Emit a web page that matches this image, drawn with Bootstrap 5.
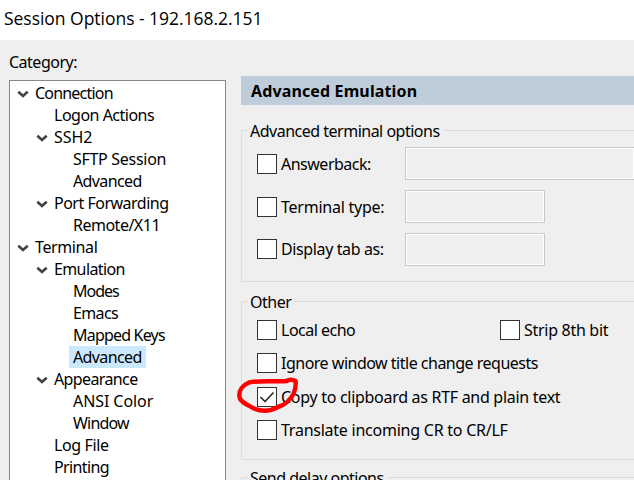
<!DOCTYPE html>
<html lang="en">
<head>
<meta charset="utf-8">
<title>Session Options - 192.168.2.151</title>
<link href="https://cdn.jsdelivr.net/npm/bootstrap@5.3.0/dist/css/bootstrap.min.css" rel="stylesheet">
<style>
body{width:634px;height:480px;background:#efefef;color:#000;font:16px/22px "Noto Sans","Open Sans",sans-serif;letter-spacing:-.38px;white-space:nowrap}
.titlebar{height:40px;padding:0 0 5px 4px;font:17.5px/24px "Open Sans","Noto Sans",sans-serif;letter-spacing:-.03px}
.side{width:241px;padding:11px 15px 0 9px}
.tree{margin-top:7px;height:400px;border:1px solid #828790;border-bottom:0;padding-top:1px}
.node{height:22px;padding-left:25px}
.node svg{width:12px;height:8px;margin:1px 6px 0 -18px;flex:none}
.l1{padding-left:44px}
.l2{padding-left:59px}
.l2 span{padding:0 4px;height:22px}
.sel{background:#cce8ff}
.banner{margin-top:36px;height:29px;padding-left:10px;background:#bfcddb;font-weight:700;letter-spacing:.13px}
.group{border:1px solid #dcdcdc;border-right:0;padding-left:15px}
.caption{width:max-content;height:22px;margin:-11px 0 0 -9px;padding:0 3px 0 2px;background:#efefef}
.g1{margin-top:25px;height:152px}
.g2{margin-top:19px;height:159px}
.g3{margin-top:17px;height:3px;border-bottom:0}
.fields{gap:10px;padding-top:5px}
.checks{gap:13.3px;padding-top:7px}
.opt{height:20px}
.box{width:20px;height:20px;border:1px solid #333;background:#fff;margin-right:4px;flex:none}
.field{height:33px;border:1px solid #c8c8c8;box-shadow:inset 0 0 0 1px #fff}
.name{width:148px;flex:none}
.raise{padding-bottom:2px}
.f2{width:140px}
.wide{width:243px;flex:none}
.scribble{left:230px;top:370px;pointer-events:none}
.w-a{letter-spacing:-1px}
.w-b{letter-spacing:-.8px}
.w-c{letter-spacing:-.62px}
.w-d{letter-spacing:-.5px}
.w-e{letter-spacing:-.29px}
.w-f{letter-spacing:-.24px}
.w-g{letter-spacing:-.08px}
</style>
<script src="https://cdn.jsdelivr.net/npm/bootstrap@5.3.0/dist/js/bootstrap.bundle.min.js"></script>
</head>
<body class="m-0 overflow-hidden position-relative">
<svg class="d-none"><symbol id="chev" viewBox="0 0 12 8"><path d="M1.3 1.7 6 6l4.700-4.300" fill="none" stroke="#444" stroke-width="2.700"/></symbol></svg>
<header class="titlebar bg-white d-flex align-items-center">Session Options - 192.168.2.151</header>
<main class="d-flex">
<aside class="side flex-shrink-0">
<div class="w-d">Category:</div>
<div class="tree bg-white">
<div class="node d-flex align-items-center"><svg><use href="#chev"/></svg><span class="w-b">Connection</span></div>
<div class="node l1 d-flex align-items-center"><span class="w-d">Logon Actions</span></div>
<div class="node l1 d-flex align-items-center"><svg><use href="#chev"/></svg><span class="w-g">SSH2</span></div>
<div class="node l2 d-flex align-items-center"><span class="w-e">SFTP Session</span></div>
<div class="node l2 d-flex align-items-center"><span class="w-c">Advanced</span></div>
<div class="node l1 d-flex align-items-center"><svg><use href="#chev"/></svg><span class="w-d">Port Forwarding</span></div>
<div class="node l2 d-flex align-items-center"><span class="w-d">Remote/X11</span></div>
<div class="node d-flex align-items-center"><svg><use href="#chev"/></svg><span>Terminal</span></div>
<div class="node l1 d-flex align-items-center"><svg><use href="#chev"/></svg><span class="w-c">Emulation</span></div>
<div class="node l2 d-flex align-items-center"><span class="w-a">Modes</span></div>
<div class="node l2 d-flex align-items-center"><span class="w-c">Emacs</span></div>
<div class="node l2 d-flex align-items-center"><span class="w-b">Mapped Keys</span></div>
<div class="node l2 d-flex align-items-center"><span class="sel w-c">Advanced</span></div>
<div class="node l1 d-flex align-items-center"><svg><use href="#chev"/></svg><span class="w-c">Appearance</span></div>
<div class="node l2 d-flex align-items-center"><span class="w-g">ANSI Color</span></div>
<div class="node l2 d-flex align-items-center"><span class="w-b">Window</span></div>
<div class="node l1 d-flex align-items-center"><span>Log File</span></div>
<div class="node l1 d-flex align-items-center"><span class="w-c">Printing</span></div>
</div>
</aside>
<section class="flex-grow-1">
<div class="banner d-flex align-items-center">Advanced Emulation</div>
<div class="group g1">
<div class="caption w-d">Advanced terminal options</div>
<div class="fields d-flex flex-column">
<div class="d-flex align-items-center"><div class="name w-d d-flex align-items-center"><span class="box"></span>Answerback:</div><div class="field flex-grow-1 border-end-0"></div></div>
<div class="d-flex align-items-center"><div class="name w-f d-flex align-items-center"><span class="box"></span>Terminal type:</div><div class="field f2"></div></div>
<div class="d-flex align-items-center"><div class="name raise d-flex align-items-center"><span class="box"></span>Display tab as:</div><div class="field f2"></div></div>
</div>
</div>
<div class="group g2">
<div class="caption w-d">Other</div>
<div class="checks d-flex flex-column">
<div class="d-flex"><div class="wide w-d opt d-flex align-items-center"><span class="box"></span>Local echo</div><div class="opt w-e d-flex align-items-center"><span class="box"></span>Strip 8th bit</div></div>
<div class="opt w-d d-flex align-items-center"><span class="box"></span>Ignore window title change requests</div>
<div class="opt w-e d-flex align-items-center"><span class="box"><svg class="d-block" width="18" height="18"><path d="M2.500 9 7 13.500 15.500 4.500" fill="none" stroke="#333" stroke-width="1.700"/></svg></span>Copy to clipboard as RTF and plain text</div>
<div class="opt w-f d-flex align-items-center"><span class="box"></span>Translate incoming CR to CR/LF</div>
</div>
</div>
<div class="group g3"><div class="caption w-d">Send delay options</div></div>
</section>
</main>
<svg class="scribble position-absolute" width="80" height="50"><path d="M57 11C48 12 30 10 19 12.500C13 15 8.500 20 9.500 27C10 32 18 35 24 38.500C32 42 41 41 48 37C56 35 60 30 63.500 24C65.500 19 66 14 65.500 11C62 9 59 9.500 56 11" fill="none" stroke="#f00" stroke-width="4.400" stroke-linejoin="round" stroke-linecap="round"/></svg>
</body>
</html>
